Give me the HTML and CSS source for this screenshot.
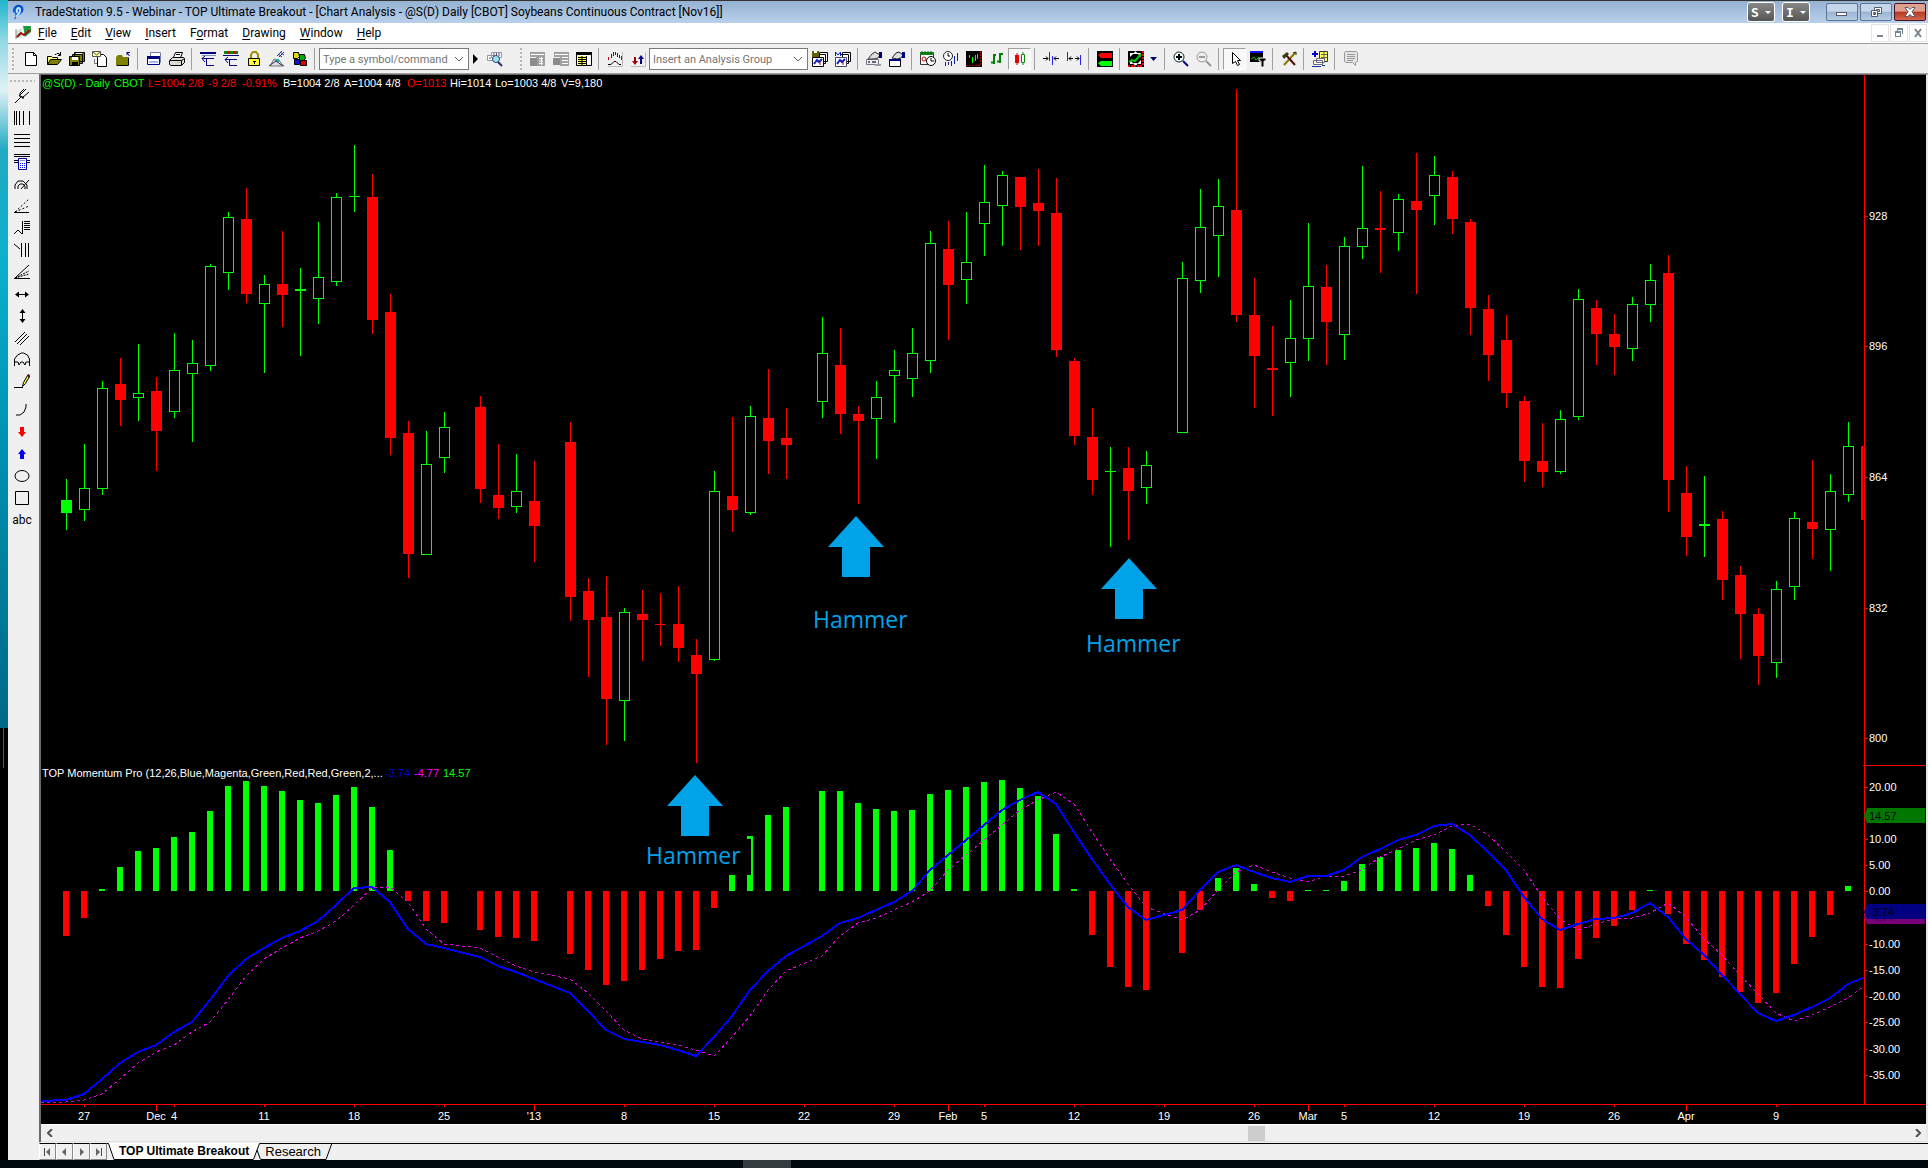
FILE: index.html
```
<!DOCTYPE html>
<html lang="en">
<head>
<meta charset="utf-8">
<title>TradeStation 9.5 - Webinar - TOP Ultimate Breakout</title>
<link rel="stylesheet" href="styles.css">
</head>
<body>
<div class="app">
  <header class="titlebar">
    <svg class="logo" width="16" height="18" viewBox="0 0 16 18"><path d="M3 17C5 12 5 10 2 9C1 4 6 1 9 2C14 3 13 9 10 11C8 12 6 14 3 17Z" fill="#0a5fe0"/><path d="M6 10C5 5 8 4 9 6C10 9 7 12 5 14" fill="none" stroke="#bfe3ff" stroke-width="2"/><path d="M4 4C8 1 12 4 11 9" fill="none" stroke="#0638b0" stroke-width="1"/></svg>
    <h1 class="caption">TradeStation 9.5 - Webinar - TOP Ultimate Breakout - [Chart Analysis - @S(D) Daily [CBOT] Soybeans Continuous Contract [Nov16]]</h1>
    <div class="badges">
      <button class="badge">S<span class="caret"></span></button>
      <button class="badge">I<span class="caret"></span></button>
    </div>
    <div class="winbtns">
      <button class="winbtn" aria-label="Minimize"><svg width="14" height="12"><rect x="1.500" y="6.500" width="10" height="3" fill="#fff" stroke="#555a6e"/></svg></button>
      <button class="winbtn" aria-label="Restore"><svg width="14" height="12"><path d="M5.500 1.500h7v6h-7zM7.500 3.500h3v2h-3z" fill="#fff" stroke="#555a6e" fill-rule="evenodd"/><path d="M2.500 4.500h6v6h-6zM4.500 6.500h2v2h-2z" fill="#fff" stroke="#555a6e" fill-rule="evenodd"/></svg></button>
      <button class="winbtn winbtn-close" aria-label="Close"><svg width="14" height="12"><path d="M2 1.500h3l2 2 2-2h3l-3 4 3 5h-3l-2-2-2 2H2l3-5z" fill="#fff" stroke="#555a6e"/></svg></button>
    </div>
  </header>

  <nav class="menubar">
    <svg class="menu-logo" width="17" height="16"><path d="M1 6l6-3v10H1z" fill="#cfe8cf"/><path d="M8 1h8v6l-6 5z" fill="#1e9a3c"/><path d="M1 14V4M1 13l4-5 4 2 7-7" fill="none" stroke="#8a8a8a"/><path d="M2 12l4-4 3 2 6-5" fill="none" stroke="#a01010" stroke-width="2"/></svg>
    <button class="menu"><u>F</u>ile</button>
    <button class="menu"><u>E</u>dit</button>
    <button class="menu"><u>V</u>iew</button>
    <button class="menu"><u>I</u>nsert</button>
    <button class="menu">F<u>o</u>rmat</button>
    <button class="menu"><u>D</u>rawing</button>
    <button class="menu"><u>W</u>indow</button>
    <button class="menu"><u>H</u>elp</button>
    <div class="mdi">
      <button class="mdibtn" aria-label="Minimize chart"><svg width="10" height="10"><path d="M2 7h6v2H2z" fill="#78848f"/></svg></button>
      <button class="mdibtn" aria-label="Restore chart"><svg width="10" height="10" fill="none" stroke="#78848f"><path d="M3 1.500h6M3.500 1v2M8.500 1v5M8 5.500h1M1 4.500h6M1.500 4v5M6.500 4v5M1 8.500h6M1 3.500h6M3 .5h6"/></svg></button>
      <button class="mdibtn" aria-label="Close chart"><svg width="10" height="10"><path d="M2 1l6 8M8 1L2 9" stroke="#78848f" stroke-width="2"/></svg></button>
    </div>
  </nav>

  <div class="toolbar">
    <span class="grip"></span>
    <button class="tool" aria-label="New"><svg width="16" height="16"><path d="M2.500 1.500h8l3 3v10h-11z" fill="#fff" stroke="#000"/><path d="M10.500 1v3.500h3" fill="none" stroke="#000"/></svg></button>
    <button class="tool" aria-label="Open"><svg width="16" height="16"><path d="M1.500 13.500v-8h4l1 1h5v3" fill="#ffff80" stroke="#000"/><path d="M1.500 13.500l3-5h11l-4 5z" fill="#808000" stroke="#000"/><path d="M9 3.500h1l1-1h2l1 2M14.500 1v3.500H12" fill="none" stroke="#000"/></svg></button>
    <button class="tool" aria-label="Save all"><svg width="16" height="16"><path d="M5.500 1.500h10v9h-10zM3.500 3.500h10v9h-10z" fill="#808000" stroke="#000"/><path d="M.5 5.500h10v9H.5z" fill="#808000" stroke="#000"/><path d="M3 6h6v3H3zM7 2h6v1H7z" fill="#fff"/><path d="M3 11h6v4H3z" fill="#000"/></svg></button>
    <button class="tool" aria-label="Copy message"><svg width="16" height="16"><path d="M5.500 3.500h6l3 3v9h-9z" fill="#fff" stroke="#000"/><path d="M.5.500h8v5h-8z" fill="#ffffa0" stroke="#555"/><path d="M1 1l3.500 3L8 1" fill="none" stroke="#555"/><path d="M2.500 8v4.500H5" fill="none" stroke="#777"/></svg></button>
    <button class="tool" aria-label="Close folder"><svg width="16" height="16"><path d="M1 14V6l2-2h4l1 2h5v8z" fill="#808000"/><path d="M1.500 14.500h12v-8" fill="none" stroke="#000"/><path d="M14.500 5L12 1.500M12 4V1.500h3" fill="none" stroke="#000080"/></svg></button>
    <span class="sep"></span>
    <button class="tool" aria-label="Page setup"><svg width="16" height="16"><path d="M4.500 1.500h10v10h-10z" fill="#fff" stroke="#7080a0"/><path d="M1.500 5.500h12v8h-12z" fill="#fff" stroke="#000080"/><path d="M1 5h13v3H1z" fill="#000080"/><path d="M3 10h9v2H3z" fill="#a0b8ff"/></svg></button>
    <button class="tool" aria-label="Print"><svg width="16" height="16"><path d="M4.500 6.500l2-5h7l-2 5z" fill="#fff" stroke="#000"/><path d="M.5 9.500l3-3h11l1 1v4l-3 3H2l-1.500-1z" fill="#ddd" stroke="#000"/><path d="M1 9.500h11.500V14M12.500 9.500l3-2M7 3.500h4" fill="none" stroke="#000"/><path d="M8 11h3v1H8z" fill="#cc0"/></svg></button>
    <span class="sep"></span>
    <button class="tool" aria-label="Insert above"><svg width="16" height="16"><path d="M0 1h16v2H0z" fill="#000080"/><path d="M2 4.500h14" stroke="#8888c0"/><path d="M2 7.500h12M6.500 8v6.500H14M5 5L2 7.500 5 11" fill="none" stroke="#000080" /></svg></button>
    <button class="tool" aria-label="Insert quotes"><svg width="16" height="16"><path d="M1 0h14v3H1z" fill="#0a8a0a"/><path d="M4 0h3v3H4zM10 0h3v3h-3z" fill="#e00"/><path d="M0 4h16v1H0z" fill="#000080"/><path d="M2 8.500h12M6.500 9v5.500H14M5 6L2 8.500 5 12" fill="none" stroke="#000080"/></svg></button>
    <button class="tool" aria-label="Lock"><svg width="16" height="16"><path d="M5 8V3.500L7 1h3l2 2.500V8" fill="none" stroke="#a09000" stroke-width="2"/><path d="M2.500 7.500h11v7h-11z" fill="#ffff30" stroke="#000"/><path d="M7 10h3v1H9v2H8v-2H7z" fill="#000"/></svg></button>
    <button class="tool" aria-label="Satellite"><svg width="16" height="16"><path d="M8 5l5-5M10 6l5-5M9 3l4 3M11 1l4 3" stroke="#2030a0"/><path d="M1 15l4-7 5 1 4 6z" fill="#dde" stroke="#777"/><path d="M6 8h4v3H6z" fill="#20b0b0"/><path d="M0 15l4-3 3-2 4 3 4 2" fill="none" stroke="#333"/></svg></button>
    <button class="tool" aria-label="Blocks"><svg width="16" height="16"><path d="M1.500 1.500h5l1 4-2 2h-4z" fill="#dd0" stroke="#000"/><path d="M7.500 3.500h5l1 4-2 2h-4z" fill="#0a0" stroke="#000"/><path d="M2.500 8.500h5v5h-5z" fill="#11c" stroke="#000"/><path d="M8.500 9.500h6v5h-6z" fill="#d00" stroke="#000"/></svg></button>
    <span class="sep"></span>
    <label class="combo combo-symbol"><input type="text" placeholder="Type a symbol/command" aria-label="Symbol or command"><svg width="10" height="6"><path d="M1 1l4 4 4-4" fill="none" stroke="#606060"/></svg></label>
    <button class="mini" aria-label="Go"><svg width="6" height="10"><path d="M0 0l5 5-5 5z" fill="#000"/></svg></button>
    <button class="tool" aria-label="Symbol lookup"><svg width="16" height="16"><path d="M4.500 1.500h10v5h-10zM.5 4.500h7v5h-7z" fill="#fff" stroke="#9098b0"/><path d="M7 2v3M9.500 2v3M12 2v3M3 6v2" stroke="#556"/><circle cx="9" cy="8" r="3.500" fill="#8fe8f8" stroke="#446"/><path d="M11 11l4 4" stroke="#203070" stroke-width="2"/></svg></button>
    <span class="grip grip-mid"></span>
    <button class="tool" aria-label="Account orders" disabled><svg width="16" height="16"><path d="M0 1h15v14H6V6H0z" fill="#a0a0a0"/><path d="M0 7h7v8H0z" fill="#8c8c8c"/><path d="M1 3.500h13M9 7.500h4M9 10h4M9 12.500h4M11.500 6v8" stroke="#fff"/></svg></button>
    <button class="tool" aria-label="Account positions" disabled><svg width="16" height="16"><path d="M1 1h15v14H7V6H1z" fill="#a0a0a0"/><path d="M0 7h7v7H0z" fill="#8c8c8c"/><path d="M2 3.500h13M9 6.500h6M9 9.500h6M9 12.500h6" stroke="#fff"/></svg></button>
    <button class="tool" aria-label="Quotes table"><svg width="16" height="16"><path d="M.5 1.500h15v13H.5z" fill="#fff" stroke="#000"/><path d="M0 1h16v3H0z" fill="#000"/><path d="M2 5h8v9H2z" fill="#ff6"/><path d="M2 6.500h8M2 8.500h8M2 10.500h8M2 12.500h8M6 5v9M10.500 5v9" stroke="#000"/></svg></button>
    <span class="sep"></span>
    <button class="tool" aria-label="Insert indicator"><svg width="16" height="16"><path d="M4.500 3v4M6.500 1v4M8.500 1v3M10.500 2v4M12.500 4v3" stroke="#1010d0"/><path d="M1.500 6v3M14.500 5v4" stroke="#c00"/><path d="M1 13.500h3l3-3h2l3 3h2" fill="none" stroke="#000"/><path d="M15.500 1v14.500H1" fill="none" stroke="#bbb"/></svg></button>
    <button class="tool" aria-label="Insert strategy"><svg width="16" height="16"><path d="M5 6v5" stroke="#a00000" stroke-width="2"/><path d="M2 10h6l-3 4z" fill="#a00000"/><path d="M11 13V7" stroke="#000090" stroke-width="2"/><path d="M8 8h6l-3-4z" fill="#000090"/><path d="M15.500 1v14.500H1" fill="none" stroke="#bbb"/></svg></button>
    <label class="combo combo-group"><input type="text" placeholder="Insert an Analysis Group" aria-label="Analysis group"><svg width="10" height="6"><path d="M1 1l4 4 4-4" fill="none" stroke="#606060"/></svg></label>
    <button class="tool" aria-label="Save analysis group"><svg width="16" height="16"><path d="M7.500 1.500h8v9h-8zM5.500 3.500h8v9h-8z" fill="#fff" stroke="#000"/><path d="M.5 6.500h11v9H.5z" fill="#fff" stroke="#000"/><path d="M0 0h7v6H0z" fill="#606000"/><path d="M2 0h3v2H2z" fill="#fff"/><path d="M2 13l3-4 2 2 3-3" fill="none" stroke="#1020c0" stroke-width="2"/><path d="M8 11v3" stroke="#c00"/></svg></button>
    <button class="tool" aria-label="Manage analysis groups"><svg width="16" height="16"><path d="M7.500 1.500h8v9h-8zM5.500 3.500h8v9h-8z" fill="#fff" stroke="#000"/><path d="M.5 6.500h11v9H.5z" fill="#fff" stroke="#446"/><path d="M0 0h6v6H0z" fill="#f0f0f0"/><path d="M.5 5V1L3 4l2.500-3v4" fill="none" stroke="#0020c0"/><path d="M2 13l3-4 2 2 3-3" fill="none" stroke="#1020c0" stroke-width="2"/><path d="M8 11v3" stroke="#c00"/></svg></button>
    <span class="sep"></span>
    <button class="tool" aria-label="Format symbol"><svg width="16" height="16"><path d="M.5 8.500h12v5H.5z" fill="#eee" stroke="#778"/><path d="M2 10h2v2H2zM6 10h4v2H6z" fill="#667"/><path d="M2 8l4-5 3-2 5 3-2 3-4 1z" fill="#ddd" stroke="#333"/><path d="M13 1h3v6h-3z" fill="#000080"/><path d="M9 13h6v2H9z" fill="#99a"/></svg></button>
    <button class="tool" aria-label="Format window"><svg width="16" height="16"><path d="M.5 8.500h11v7H.5z" fill="#fff" stroke="#000"/><path d="M0 8h12v2H0z" fill="#000080"/><path d="M3 7l4-5 3-1 4 3-2 3-4 1z" fill="#ddd" stroke="#222"/><path d="M13 1h3v6h-3z" fill="#000080"/></svg></button>
    <span class="sep"></span>
    <button class="tool" aria-label="Session time"><svg width="16" height="16"><path d="M.5 2.500h13v11H.5z" fill="#fff" stroke="#333"/><path d="M0 1h14v3H0z" fill="#0a8a0a"/><path d="M2 0v3M5 0v3M8 0v3M11 0v3" stroke="#053"/><circle cx="4" cy="8" r="2" fill="none" stroke="#d00"/><circle cx="11" cy="10" r="4.500" fill="#fff" stroke="#000"/><path d="M11 7v3h3" fill="none" stroke="#000"/></svg></button>
    <button class="tool" aria-label="Interval"><svg width="16" height="16"><circle cx="5" cy="5" r="4.500" fill="#fff" stroke="#222"/><path d="M5 2v3h2" fill="none" stroke="#000"/><path d="M2.500 11v4M5.500 11v3M8.500 10v5M11.500 5v8M14.500 2v8" stroke="#1020a0"/></svg></button>
    <button class="tool" aria-label="Chart colors"><svg width="16" height="16"><path d="M0 0h16v16H0z" fill="#000"/><path d="M3.500 4v3M6.500 6v6M9.500 4v6M11.500 3v5" stroke="#0f0"/><path d="M14.500 0v14M0 14.500h15" stroke="#a00" stroke-dasharray="2 1"/></svg></button>
    <button class="tool" aria-label="Bar style"><svg width="16" height="16"><path d="M5 3v10M2 11.500h3M5 4h2M11 2v10M8 10.500h3M11 3h3" fill="none" stroke="#008000" stroke-width="2"/></svg></button>
    <button class="tool tool-on" aria-label="Candlestick style"><svg width="16" height="16"><path d="M3 4h4v8H3z" fill="#f00"/><path d="M5 2v12" stroke="#c00"/><path d="M9.500 3.500h3v8h-3z" fill="#fff" stroke="#0a8a0a"/><path d="M11 1v2M11 12v2" stroke="#0a8a0a"/></svg></button>
    <span class="sep"></span>
    <button class="tool" aria-label="Decrease spacing"><svg width="16" height="16"><path d="M6.500 1v9M9.500 5v9" stroke="#22f" stroke-width="1"/><path d="M0 7.500h5M3 5.500l2 2-2 2M16 7.500h-5M13 5.500l-2 2 2 2" fill="none" stroke="#000"/></svg></button>
    <button class="tool" aria-label="Increase spacing"><svg width="16" height="16"><path d="M1.500 1v9M14.500 4v10" stroke="#22f" stroke-width="1"/><path d="M3 7.500h4M5 5.500l-2 2 2 2M13 7.500H9M11 5.500l2 2-2 2" fill="none" stroke="#000"/></svg></button>
    <span class="sep"></span>
    <button class="tool" aria-label="Market depth"><svg width="16" height="16"><path d="M0 0h16v16H0z" fill="#000"/><path d="M1 4l3-2h11v5H4z" fill="#f00"/><path d="M1 12l3-2h11v5H4z" fill="#0f0"/></svg></button>
    <span class="sep"></span>
    <button class="tool" aria-label="Fit chart"><svg width="16" height="16"><path d="M0 0h16v16H0z" fill="#000"/><path d="M2 2h4L2 6zM13 2v4L9 2zM2 13V9l4 4zM13 13H9l4-4zM7.500 0L10 3H5zM7.500 15l3-3h-6z" fill="#fff"/><path d="M1 11l3-2 3 1 6-7" fill="none" stroke="#0c0" stroke-width="2"/><path d="M15 0v15M0 15h15" stroke="#f00" stroke-width="2" stroke-dasharray="2 1"/></svg></button>
    <button class="mini" aria-label="Fit options"><svg width="8" height="5"><path d="M0 0h7L3.500 4z" fill="#000080"/></svg></button>
    <span class="sep"></span>
    <button class="tool" aria-label="Zoom in"><svg width="16" height="16"><circle cx="6" cy="6" r="5" fill="#e8ffff" stroke="#222"/><path d="M3 6h6M6 3v6" stroke="#000" stroke-width="2"/><path d="M10 10l5 5" stroke="#000080" stroke-width="2"/></svg></button>
    <button class="tool" aria-label="Zoom out" disabled><svg width="16" height="16"><circle cx="6" cy="6" r="5" fill="#eee" stroke="#999"/><path d="M3 6h6" stroke="#999" stroke-width="2"/><path d="M10 10l5 5" stroke="#999" stroke-width="2"/></svg></button>
    <span class="sep"></span>
    <button class="tool tool-on" aria-label="Pointer"><svg width="16" height="16"><path d="M5.500 1.500v11l3-2 2 4 2-1-2-4h3z" fill="#fff" stroke="#000"/></svg></button>
    <button class="tool" aria-label="Chart text"><svg width="16" height="16"><path d="M0 0h13v11H0z" fill="#000"/><path d="M0 0h13v2H0z" fill="#11f"/><path d="M1 8l3-2 2 3 3-3" fill="none" stroke="#0c0"/><path d="M9 7h7v3h-2v6h-3v-6H9z" fill="#000" stroke="#eee"/></svg></button>
    <span class="sep"></span>
    <button class="tool" aria-label="Customize"><svg width="16" height="16"><path d="M14 2L3 14" stroke="#887700" stroke-width="2"/><path d="M5 4l9 10" stroke="#501010" stroke-width="2"/><path d="M1 5l5-4 2 2-5 5z" fill="#403c10"/><path d="M12 2l3-1v3" fill="none" stroke="#222"/></svg></button>
    <span class="sep"></span>
    <button class="tool" aria-label="Add workspace"><svg width="16" height="16"><path d="M3 0v6M0 3h6" stroke="#00d" stroke-width="2"/><path d="M7.500.500h8v10h-8z" fill="#ff5" stroke="#333"/><path d="M9 3.500h6M9 6.500h6M12 1v9" stroke="#665"/><path d="M4.500 7.500h8v4h-8zM1.500 9.500h9v4h-9z" fill="#fff" stroke="#667"/><path d="M0 15h9v1H0zM10 14h3v1h-3z" fill="#1030a0"/></svg></button>
    <span class="sep"></span>
    <button class="tool" aria-label="Notes" disabled><svg width="16" height="16"><path d="M2.500.500h11l1 1v9l-2 1v3l-3-3h-7l-1-1v-9z" fill="#e4e4e4" stroke="#999"/><path d="M4 3.500h8M4 5.500h8M4 7.500h8M4 9.500h6" stroke="#999"/></svg></button>
  </div>

  <main class="workspace">
    <aside class="drawbar">
      <span class="grip-row"></span>
      <button class="draw" aria-label="Pitchfork"><svg width="16" height="16"><path d="M1 15l7-7M6 5v4h4M5 8l7-7M8 10l7-6M6 5l4-4M10 10h-2" fill="none" stroke="#000"/></svg></button>
      <button class="draw" aria-label="Time lines"><svg width="16" height="16"><path d="M.5 1v14M2.500 1v14M5.500 1v14M9.500 1v14M15.500 1v14" stroke="#000"/></svg></button>
      <button class="draw" aria-label="Price lines"><svg width="16" height="16"><path d="M0 2.500h16M0 6.500h16M0 10.500h16M0 14.500h16" stroke="#000"/></svg></button>
      <button class="draw" aria-label="Line calculator"><svg width="16" height="16"><path d="M0 .5h16M0 2.500h16M0 6.500h16M0 8.500h16" stroke="#000"/><path d="M4.500 4.500h8v11h-8z" fill="#fff" stroke="#0000a0"/><path d="M6 6.500h5" stroke="#88c"/><path d="M6 9.500h5M6 11.500h5M6 13.500h5" stroke="#00f" stroke-dasharray="1 1"/></svg></button>
      <button class="draw" aria-label="Speed arcs"><svg width="16" height="16" fill="none" stroke="#000"><path d="M1 13V9l3-4h5l4 4v4M4 13v-3l2-2h3l2 2v3M7 13l8-9"/></svg></button>
      <button class="draw" aria-label="Gann fan"><svg width="16" height="16" stroke="#000"><path d="M0 14.500h15"/><path d="M1 14L15 1M1 14l14-6" stroke-dasharray="2 2"/></svg></button>
      <button class="draw" aria-label="Retracement"><svg width="16" height="16" fill="none" stroke="#000"><path d="M0 14l4-4 4 4M8.500 14V1M10 1.500h6M10 3.500h6M10 5.500h6M10 7.500h6M10 9.500h6"/></svg></button>
      <button class="draw" aria-label="Time zones"><svg width="16" height="16" fill="none" stroke="#000"><path d="M0 2l6 5M7.500 1v14M11.500 1v14M14.500 1v14"/></svg></button>
      <button class="draw" aria-label="Speed lines"><svg width="16" height="16" stroke="#000"><path d="M0 14.500h16M1 14L15 1"/><path d="M1 14l14-7M1 14l14-4" stroke-dasharray="2 1"/></svg></button>
      <button class="draw" aria-label="Horizontal line"><svg width="16" height="16"><path d="M2 8.500h12" stroke="#000"/><path d="M1 8.500l4-3v6zM15 8.500l-4-3v6z"/></svg></button>
      <button class="draw" aria-label="Vertical line"><svg width="16" height="16"><path d="M8.500 2v12" stroke="#000"/><path d="M8.500 1l3 4h-6zM8.500 15l3-4h-6z"/></svg></button>
      <button class="draw" aria-label="Parallel lines"><svg width="16" height="16" stroke="#000"><path d="M1 12L11 2M3 14L13 4M6 15l9-9"/></svg></button>
      <button class="draw" aria-label="Cycle arc"><svg width="16" height="16" fill="none" stroke="#000"><path d="M.5 14V7l3-4 4-2h2l4 2 2 4v7M1 10h3l1 3 2-3h2l2 3 1-3h3"/></svg></button>
      <button class="draw" aria-label="Pencil"><svg width="16" height="16"><path d="M0 13.500h9" stroke="#000"/><path d="M8.500 12.500l1-4 4-7 2 1-4 7z" fill="#ee5" stroke="#000"/><path d="M13 1l2-1 1 2-1 2z" fill="#500"/></svg></button>
      <button class="draw draw-gap" aria-label="Arc"><svg width="16" height="16"><path d="M2 13h4l4-3 2-5V2" fill="none" stroke="#000"/></svg></button>
      <button class="draw" aria-label="Down arrow"><svg width="16" height="16"><path d="M6 3h4v5h2l-4 5-4-5h2z" fill="#f00"/></svg></button>
      <button class="draw" aria-label="Up arrow"><svg width="16" height="16"><path d="M6 13h4V8h2L8 3 4 8h2z" fill="#00f"/></svg></button>
      <button class="draw" aria-label="Ellipse"><svg width="16" height="16"><ellipse cx="8" cy="8" rx="7" ry="5.500" fill="none" stroke="#000"/></svg></button>
      <button class="draw" aria-label="Rectangle"><svg width="16" height="16"><path d="M1.500 1.500h13v13h-13z" fill="none" stroke="#000"/></svg></button>
      <button class="draw">abc</button>
    </aside>

    <section class="chart-window">
      <svg id="chart" class="chart" viewBox="41 75 1885 1049" role="img" aria-label="Soybeans daily candlestick chart with momentum"></svg>
      <div class="scroll">
        <button class="scroll-btn" aria-label="Scroll left"><svg width="8" height="8"><path d="M6 0L2 4l4 4" fill="none" stroke="#505050" stroke-width="2"/></svg></button>
        <input class="scroll-bar" type="range" min="0" max="1000" value="649" aria-label="Chart position">
        <button class="scroll-btn" aria-label="Scroll right"><svg width="8" height="8"><path d="M2 0l4 4-4 4" fill="none" stroke="#505050" stroke-width="2"/></svg></button>
      </div>
    </section>
  </main>

  <footer class="tabs">
    <button class="nav" aria-label="First"><svg width="9" height="8"><path d="M1.500 0v8" stroke="#444"/><path d="M7 0v8L3 4z" fill="#666"/></svg></button>
    <button class="nav" aria-label="Previous"><svg width="9" height="8"><path d="M6 0v8L2 4z" fill="#666"/></svg></button>
    <button class="nav" aria-label="Next"><svg width="9" height="8"><path d="M3 0v8l4-4z" fill="#666"/></svg></button>
    <button class="nav" aria-label="Last"><svg width="9" height="8"><path d="M2 0v8l4-4z" fill="#666"/><path d="M7.500 0v8" stroke="#444"/></svg></button>
    <svg class="edge" width="8" height="17"><path d="M1 0h7v17H7z" fill="#fff"/><path d="M0 .5h1.500L7 16.500h1" fill="none" stroke="#000"/></svg>
    <a class="tab tab-on" href="#top">TOP Ultimate Breakout</a>
    <svg class="edge" width="8" height="17"><path d="M0 0h6L0 16z" fill="#fff"/><path d="M8 .5H6.500L.5 16.500M4 7l3.500 9.500" fill="none" stroke="#000"/></svg>
    <a class="tab" href="#research">Research</a>
    <svg class="edge" width="8" height="17"><path d="M0 .5h8M7 0L1 16.500H0" fill="none" stroke="#000"/></svg>
    <span class="tab-rest"></span>
  </footer>
</div>
<div class="taskbar"><span class="task"></span></div>
<script src="chart.js"></script>
</body>
</html>
```
FILE: styles.css
```
* { box-sizing: border-box; }
body {
  margin: 0;
  font-family: Roboto, "Noto Sans", sans-serif;
  font-size: 12px;
  color: #000;
  background:
    linear-gradient(#4a6068, #4a6068) 3px 728px / 1px 40px no-repeat,
    linear-gradient(#1fb6cc 0, #8fd8e4 40px, #e0f2f5 90px, #22a9c4 150px, #0cb0cc 260px, #0098b8 400px, #006888 728px, #000 728px) no-repeat;
  min-height: 100vh;
}
button { font: inherit; color: inherit; border: 0; padding: 0; margin: 0; background: none; display: flex; align-items: center; justify-content: center; }
svg { display: block; flex: none; }
.app { margin-left: 8px; background: #f0f0f0; display: flex; flex-direction: column; }

.titlebar { height: 23px; border-top: 1px solid #333; background: linear-gradient(#96b2d2, #b8d0eb); display: flex; align-items: center; padding: 0 2px 0 3px; }
.logo { margin-right: 8px; }
.caption { margin: 0; flex: 1; font-size: 12px; font-weight: 400; line-height: 22px; white-space: nowrap; overflow: hidden; }
.badges { display: flex; gap: 7px; margin-right: 16px; }
.badge { width: 28px; height: 20px; border: 1px solid #fff; border-radius: 3px; background: linear-gradient(#888, #555); color: #fff; font: bold 13px "DejaVu Sans Mono", monospace; gap: 6px; }
.caret { border: 3px solid transparent; border-top-color: #fff; border-bottom: 0; }
.winbtns { display: flex; gap: 2px; }
.winbtn { width: 32px; height: 18px; border: 1px solid #5f7491; border-radius: 2px; background: linear-gradient(#c6d6ea 45%, #9cb4d2 50%, #b4cbe6); }
.winbtn-close { border-color: #4a1020; background: linear-gradient(#e0a090 45%, #b83820 50%, #d06850); }

.menubar { height: 21px; background: #fff; border-bottom: 1px solid #a0a0a0; display: flex; align-items: center; padding-left: 7px; margin-bottom: 1px; }
.menu { padding: 0 7px; line-height: 19px; display: block; }
.menu-logo { margin-right: -1px; }
.menu u { text-underline-offset: 2px; }
.mdi { margin-left: auto; display: flex; gap: 1px; padding-right: 1px; }
.mdibtn { width: 18px; height: 18px; border: 1px solid #e4e4e4; }

.toolbar { height: 29px; border-bottom: 1px solid #a0a0a0; display: flex; align-items: center; }
.tool { width: 23px; height: 23px; flex: none; }
.tool-on { height: 22px; border: 1px solid; border-color: #a0a0a0 #fff #fff #a0a0a0; background: #f8f8f8; }
.mini { width: 14px; height: 22px; flex: none; }
.sep { width: 8px; height: 22px; flex: none; background: linear-gradient(#a0a0a0, #a0a0a0) 3px 0 / 1px 100% no-repeat; }
.grip { width: 11px; height: 24px; flex: none; background: radial-gradient(#b8b8b8 1px, transparent 1px) 3px 0 / 4px 4px repeat-y; }
.grip-mid { width: 20px; background-position-x: 13px; }
.combo { height: 22px; border: 1px solid #7a7a7a; background: #fff; display: flex; align-items: center; padding: 0 4px 0 3px; flex: none; }
.combo input { flex: 1; min-width: 0; border: 0; padding: 0; outline: 0; background: none; font: 11px Roboto, "Noto Sans", sans-serif; }
.combo input::placeholder { color: #757575; opacity: 1; }
.combo-symbol { width: 150px; }
.combo-group { width: 159px; }

.workspace { display: flex; align-items: stretch; }
.drawbar { width: 31px; flex: none; display: flex; flex-direction: column; align-items: center; padding-right: 3px; padding-top: 5px; }
.grip-row { width: 26px; height: 6px; background: radial-gradient(#b8b8b8 1px, transparent 1px) 0 0 / 4px 4px repeat-x; }
.draw { width: 24px; height: 22px; flex: none; }
.draw-gap { margin-top: 6px; }
.chart-window { flex: 1; min-width: 0; border-left: 2px solid #696969; border-right: 2px solid #e8e8e8; border-top: 1px solid #696969; }
.chart { width: 100%; height: auto; background: #000; font: 11px "Liberation Sans", Arial, sans-serif; }
.chart .crisp { shape-rendering: crispEdges; }
.chart .note { font: 23px "Open Sans", "Noto Sans", sans-serif; fill: #00a2e8; }
.up { fill: #0f0; }
.down { fill: #f00; }
.hollow { fill: #000; stroke: #0f0; }
.axis { fill: #f00; }
.fast { fill: none; stroke: #00f; stroke-width: 2; stroke-linejoin: round; }
.slow { fill: none; stroke: #e000e0; stroke-dasharray: 3 3; }

.scroll { height: 18px; display: flex; border-top: 1px solid #fff; border-bottom: 1px solid #e0e0e0; background: #f0f0f0; }
.scroll-btn { width: 17px; }
.scroll-bar { flex: 1; min-width: 0; margin: 0; appearance: none; background: none; height: 16px; }
.scroll-bar::-webkit-slider-thumb { appearance: none; width: 17px; height: 15px; background: #cdcdcd; }

.tabs { height: 18px; padding-top: 1px; padding-left: 31px; display: flex; }
.nav { width: 17px; height: 17px; flex: none; border: 1px solid; border-color: #000 #888 #888 #fff; }
.tab { font: 13px/15px "Liberation Sans", Arial, sans-serif; color: #000; text-decoration: none; padding: 0 4px; border: 1px solid #000; border-width: 1px 0; white-space: nowrap; }
.tab-on { background: #fff; font-size: 12px; font-weight: 700; border-top-color: #fff; }
.tab-rest { flex: 1; border-top: 1px solid #000; }
.taskbar { height: 8px; background: #00090e; padding-left: 743px; }
.task { display: block; width: 48px; height: 8px; background: #343c40; }
```
FILE: chart.js
```
// Bars sit 18 units apart; each slot index maps to a column centre.
const X0 = 66, STEP = 18, ZERO = 891, RIGHT = 1864;
const col = i => X0 + i * STEP;

// slot, high, body top, body bottom, low, kind (g hollow up, r down, f filled up)
const candles = `0 479 500 513 530 f|1 444 488 510 521 g|2 381 388 489 495 g|3 358 384 400 426 r|4 344 393 398 421 g|5 377 391 431 471 r|6 333 370 412 418 g|7 340 363 374 442 g|8 264 266 366 371 g|9 212 217 273 290 g|10 188 219 294 303 r|11 275 284 304 373 g|12 231 284 295 327 r|13 268 289 291 356 f|14 222 277 299 324 g|15 193 197 282 286 g|16 145 196 197 212 f|17 174 197 320 334 r|18 294 312 438 455 r|19 421 433 554 578 r|20 431 464 555 555 g|21 412 427 458 473 g|23 396 407 489 503 r|24 444 495 508 519 r|25 454 491 507 513 g|26 461 501 526 562 r|28 422 442 597 621 r|29 578 591 620 677 r|30 576 617 699 745 r|31 608 612 701 741 g|32 590 614 620 661 r|33 593 624 625 646 r|34 586 624 648 662 r|35 639 655 674 763 r|36 471 491 660 661 g|37 417 496 510 532 r|38 406 416 513 515 g|39 369 418 441 474 r|40 408 438 445 479 r|42 317 353 402 418 g|43 328 365 414 434 r|44 406 414 421 504 r|45 381 397 419 459 g|46 350 370 376 423 g|47 328 353 379 397 g|48 231 243 361 373 g|49 221 249 285 340 r|50 212 262 280 304 g|51 165 202 224 256 g|52 171 175 206 246 g|53 177 177 207 250 r|54 169 203 211 246 r|55 178 213 350 357 r|56 358 361 436 445 r|57 408 437 480 495 r|58 447 471 472 547 f|59 447 468 491 540 r|60 451 465 488 504 g|62 262 278 433 433 g|63 189 227 281 293 g|64 179 206 236 277 g|65 89 210 315 322 r|66 278 315 356 408 r|67 326 368 370 416 r|68 300 338 363 397 g|69 223 286 339 361 g|70 265 287 322 365 r|71 237 246 335 360 g|72 166 228 247 259 g|73 191 228 230 273 r|74 194 199 233 251 g|75 153 201 210 294 r|76 156 175 196 225 g|77 171 177 219 234 r|78 219 222 308 335 r|79 295 309 355 381 r|80 315 340 393 408 r|81 396 401 461 482 r|82 423 461 472 487 r|83 410 419 472 474 g|84 289 299 417 420 g|85 300 308 334 365 r|86 314 334 347 375 r|87 297 304 349 361 g|88 264 280 305 322 g|89 255 273 480 512 r|90 466 493 537 556 r|91 476 524 526 557 f|92 511 519 580 600 r|93 566 575 614 659 r|94 608 614 656 685 r|95 581 589 663 678 g|96 512 518 587 600 g|97 460 522 529 559 r|98 474 491 530 571 g|99 422 446 495 502 g`
  .split("|").map(s => s.split(" "));

// slot: [histogram end, fast line]
const momentum = `0 936 1100|1 918 1094|2 889 1079|3 867 1063|4 851 1052|5 848 1045|6 837 1032|7 832 1022|8 811 1000|9 786 976|10 781 959|11 786 948|12 791 938|13 800 931|14 803 921|15 795 905|16 787 888|17 807 887|18 850 902|19 901 929|20 921 944|21 923 948|23 930 957|24 937 966|25 938 972|26 941 979|28 954 993|29 970 1011|30 985 1030|31 981 1039|32 970 1042|33 959 1045|34 951 1050|35 950 1056|36 908 1037|37 875 1016|38 836 990|39 815 971|40 807 956|42 791 936|43 791 923|44 803 918|45 809 910|46 811 902|47 810 891|48 794 870|49 790 855|50 787 840|51 782 825|52 780 810|53 788 800|54 796 792|55 834 804|56 889 832|57 935 859|58 967 884|59 987 907|60 990 920|62 953 910|63 910 890|64 878 872|65 868 865|66 884 872|67 898 878|68 901 882|69 890 876|70 890 876|71 881 870|72 864 857|73 857 849|74 850 840|75 848 835|76 843 826|77 849 824|78 875 835|79 906 852|80 935 870|81 967 897|82 987 919|83 988 930|84 959 924|85 938 919|86 926 918|87 910 913|88 890 903|89 914 917|90 944 939|91 960 955|92 977 975|93 992 994|94 1003 1013|95 993 1021|96 964 1015|97 937 1007|98 915 998|99 886 984`
  .split("|").map(s => s.split(" ").map(Number));

const rect = (x, y, w, h, c) => `<rect class="${c}" x="${x}" y="${y}" width="${w}" height="${h}"/>`;
const text = (x, y, s, fill = "#fff", extra = "") => `<text x="${x}" y="${y}" fill="${fill}" ${extra}>${s}</text>`;

let out = '<g class="crisp">';
for (const [i, ...v] of candles) {
  const kind = v.pop(), [hi, top, bot, lo] = v.map(Number), x = col(+i);
  const c = kind === "r" ? "down" : "up";
  out += rect(x, hi, 1, lo - hi, c);
  out += kind === "g"
    ? `<rect class="hollow" x="${x - 4.5}" y="${top + 0.5}" width="10" height="${bot - top - 1}"/>`
    : rect(x - 5, top, 11, bot - top, c);
}
out += rect(1861, 446, 2, 74, "down");
for (const [i, end] of momentum)
  out += rect(col(i) - 3, Math.min(end, ZERO), 6, Math.abs(end - ZERO), end < ZERO ? "up" : "down");
out += rect(640, 839, 111, 36, "plate") + "</g>";

const fast = [[41, 1101], ...momentum.map(m => [col(m[0]), m[2]]), [1863, 978]];
const slow = [[41, 1102], [66, 1102], ...momentum.slice(1).map((m, k) => [col(m[0]), momentum[k][2]]), [1863, 987]];
out += `<polyline class="slow crisp" points="${slow.join(" ")}"/><polyline class="fast crisp" points="${fast.join(" ")}"/>`;

// axes
out += '<g class="crisp">' + rect(RIGHT, 75, 1, 1029, "axis") + rect(1863, 765, 63, 1, "axis") + rect(41, 1104, 1885, 1, "axis");
const scale = [[216, "928"], [346, "896"], [477, "864"], [608, "832"], [738, "800"], [787, "20.00"], [839, "10.00"], [865, "5.00"], [891, "0.00"], [944, "-10.00"], [970, "-15.00"], [996, "-20.00"], [1022, "-25.00"], [1049, "-30.00"], [1075, "-35.00"]];
for (const [y] of scale) out += rect(RIGHT, y, 4, 1, "axis");
const dates = [[1, "27"], [5, "Dec", 1], [6, "4"], [11, "11"], [16, "18"], [21, "25"], [26, "'13", 1], [31, "8"], [36, "15"], [41, "22"], [46, "29"], [49, "Feb", 1], [51, "5"], [56, "12"], [61, "19"], [66, "26"], [69, "Mar", 1], [71, "5"], [76, "12"], [81, "19"], [86, "26"], [90, "Apr", 1], [95, "9"]];
for (const [i, , month] of dates) out += rect(col(i), 1105, 1, month ? 6 : 2, "axis");
out += "</g>";
for (const [y, s] of scale) out += text(1869, y + 4, s);
for (const [i, s] of dates) out += text(col(i), 1120, s, "#fff", 'text-anchor="middle"');

// value tags on the scale
const tag = (y, fill) => `<path d="M1864 ${y}l3-8h58v15h-58z" fill="${fill}"/>`;
out += tag(816, "#007800") + text(1869, 820, "14.57", "#000")
  + tag(917, "#780078") + text(1869, 921, "-4.77", "#300030")
  + tag(912, "#000080") + text(1869, 916, "-3.74", "#000");

// status lines
for (const [x, s, f] of [[42, "@S(D) - Daily", "#0f0"], [114, "CBOT", "#0f0"], [148, "L=1004 2/8", "#f00"], [208, "-9 2/8", "#f00"], [242, "-0.91%", "#f00"], [283, "B=1004 2/8"], [344, "A=1004 4/8"], [407, "O=1013", "#f00"], [450, "Hi=1014"], [495, "Lo=1003 4/8"], [561, "V=9,180"]])
  out += text(x, 87, s, f);
for (const [x, s, f] of [[42, "TOP Momentum Pro (12,26,Blue,Magenta,Green,Red,Red,Green,2,..."], [385, "-3.74", "#0000e0"], [414, "-4.77", "#f0f"], [443, "14.57", "#0f0"]])
  out += text(x, 777, s, f);

// hammer call-outs: arrow tip, then text origin
for (const [ax, ay, tx, ty] of [[856, 516, 813, 628], [1129, 558, 1086, 652], [695, 775, 646, 864]])
  out += `<path d="M${ax} ${ay}l28 31h-14v30h-28v-30h-14z" fill="#00a2e8"/><text class="note" x="${tx}" y="${ty}">Hammer</text>`;

document.getElementById("chart").innerHTML = out;
```
